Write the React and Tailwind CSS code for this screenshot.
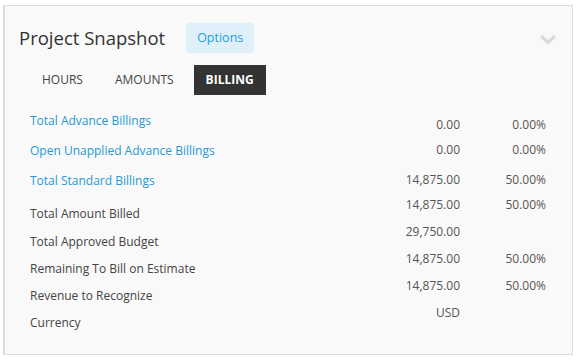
import React from "react";

const labels = [
  { t: "Total Advance Billings", link: true, mt: "mt-[16px]" },
  { t: "Open Unapplied Advance Billings", link: true, mt: "mt-[10px]" },
  { t: "Total Standard Billings", link: true, mt: "mt-[10px]" },
  { t: "Total Amount Billed", link: false, mt: "mt-[13px]" },
  { t: "Total Approved Budget", link: false, mt: "mt-[8px]" },
  { t: "Remaining To Bill on Estimate", link: false, mt: "mt-[7px]" },
  { t: "Revenue to Recognize", link: false, mt: "mt-[7px]" },
  { t: "Currency", link: false, mt: "mt-[7px]" },
];

const values = [
  { a: "0.00", p: "0.00%", mt: "mt-[20px]" },
  { a: "0.00", p: "0.00%", mt: "mt-[5px]" },
  { a: "14,875.00", p: "50.00%", mt: "mt-[10px]" },
  { a: "14,875.00", p: "50.00%", mt: "mt-[5px]" },
  { a: "29,750.00", p: "", mt: "mt-[7px]" },
  { a: "14,875.00", p: "50.00%", mt: "mt-[7px]" },
  { a: "14,875.00", p: "50.00%", mt: "mt-[7px]" },
  { a: "USD", p: "", mt: "mt-[7px]" },
];

export default function App() {
  return (
    <div className="w-[578px] h-[362px] bg-white pt-[5px] pl-[3px]" style={{ fontFamily: '"Open Sans", sans-serif' }}>
      <div className="w-[570px] h-[350px] bg-[#f9f9f9] border border-[#dcdcdc] border-l-2 flex flex-col">
        <div className="flex items-center h-[48px] mt-[8px] pl-[14px] pr-[16px]">
          <div className="text-[18.5px] text-[#333] leading-none">Project Snapshot</div>
          <div className="ml-[21px] h-[30px] px-[11px] flex items-center rounded-[3px] bg-[#dff0fb] text-[12.5px] text-[#2a9fd8]">Options</div>
          <div className="flex-1" />
          <svg width="16" height="10" viewBox="0 0 16 10" className="mt-[4px]">
            <path d="M2 2 L8 7.5 L14 2" fill="none" stroke="#dadada" strokeWidth="3.2" strokeLinecap="round" strokeLinejoin="round" />
          </svg>
        </div>
        <div className="flex items-center pl-[25px] mt-[3px] gap-[8px] text-[12px] uppercase">
          <div className="h-[30px] px-[12px] flex items-center text-[#444]">HOURS</div>
          <div className="h-[30px] px-[12px] flex items-center text-[#444]">AMOUNTS</div>
          <div className="h-[30px] px-[12px] flex items-center bg-[#333] text-white font-bold">BILLING</div>
        </div>
        <div className="flex text-[12px] text-[#444]">
          <div className="flex flex-col pl-[25px] w-[328px]">
            {labels.map((l, i) => (
              <div key={i} className={`${l.mt} h-[20px] leading-[20px] whitespace-nowrap ${l.link ? "text-[#1e9ad6]" : "text-[#444]"}`}>{l.t}</div>
            ))}
          </div>
          <div className="flex flex-col">
            {values.map((v, i) => (
              <div key={i} className={`${v.mt} h-[20px] leading-[20px] flex text-[#555]`}>
                <div className="w-[127px] text-right">{v.a}</div>
                <div className="w-[86px] text-right">{v.p}</div>
              </div>
            ))}
          </div>
        </div>
      </div>
    </div>
  );
}
